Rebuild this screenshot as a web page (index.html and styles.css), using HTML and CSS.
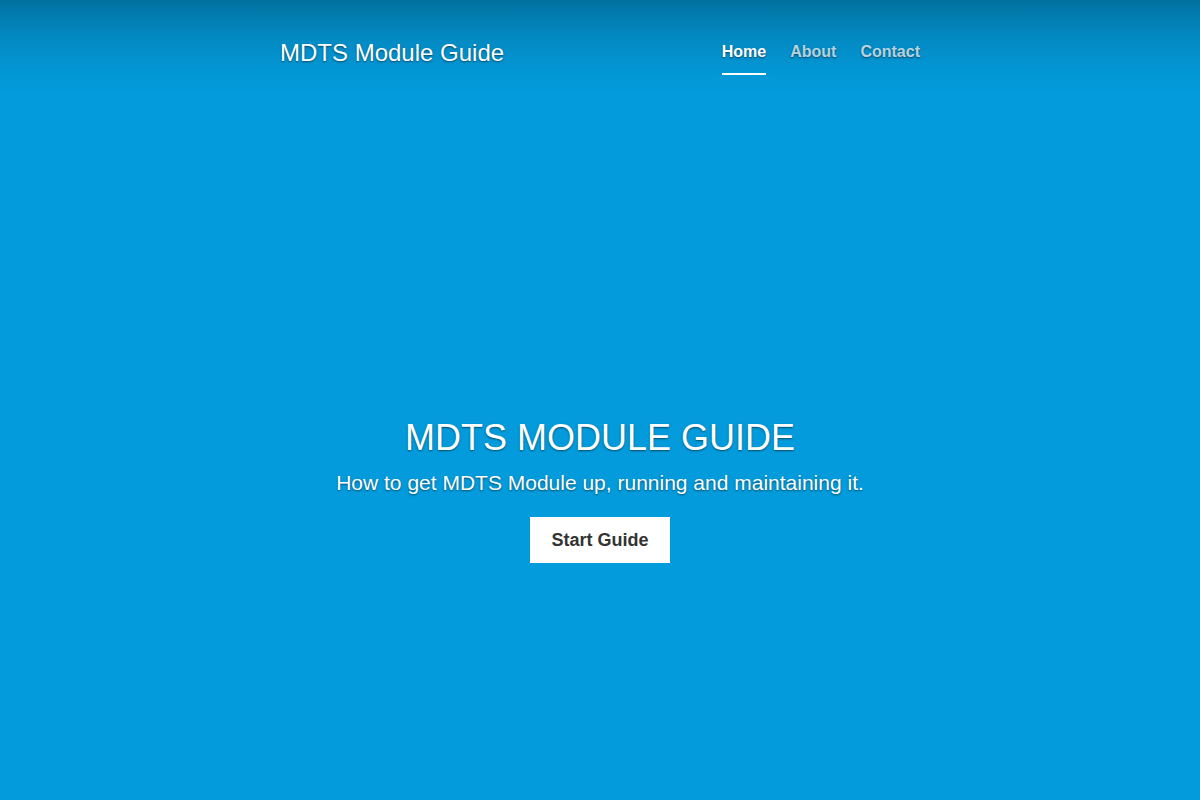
FILE: index.html
```html
<!DOCTYPE html>
<html lang="en">
<head>
<meta charset="utf-8">
<title>MDTS Module Guide</title>
<link rel="stylesheet" href="styles.css">
</head>
<body>
<div class="page">
  <header class="masthead">
    <div class="brand">MDTS Module Guide</div>
    <nav class="nav">
      <a class="nav-link active" href="#">Home</a>
      <a class="nav-link" href="#">About</a>
      <a class="nav-link" href="#">Contact</a>
    </nav>
  </header>
  <main class="hero">
    <h1 class="hero-title">MDTS MODULE GUIDE</h1>
    <p class="lead">How to get MDTS Module up, running and maintaining it.</p>
    <a class="btn" href="#">Start Guide</a>
  </main>
</div>
</body>
</html>
```
FILE: styles.css
```css
html, body {
  margin: 0;
  padding: 0;
  height: 100%;
}
body {
  background: #039bdb;
  font-family: "Liberation Sans", Arial, sans-serif;
  color: #fff;
  text-shadow: 0 1px 2px rgba(0, 0, 0, 0.5);
}
.page {
  min-height: 100%;
  display: flex;
  flex-direction: column;
  background: linear-gradient(to bottom, rgba(0, 0, 0, 0.27) 0, rgba(0, 0, 0, 0.12) 35px, rgba(0, 0, 0, 0.03) 70px, rgba(0, 0, 0, 0) 95px);
}
.masthead {
  width: 640px;
  margin: 0 auto;
  padding-top: 37px;
  display: flex;
  justify-content: space-between;
  align-items: flex-start;
}
.brand {
  font-size: 24px;
  line-height: 32px;
}
.nav {
  display: flex;
  gap: 24px;
  margin-top: 3px;
}
.nav-link {
  font-size: 16px;
  line-height: 24px;
  font-weight: 700;
  color: rgba(255, 255, 255, 0.72);
  text-decoration: none;
  padding-bottom: 9px;
  border-bottom: 2px solid transparent;
}
.nav-link.active {
  color: #fff;
  border-bottom-color: #fff;
}
.hero {
  margin-top: 341px;
  display: flex;
  flex-direction: column;
  align-items: center;
  text-align: center;
}
.hero-title {
  margin: 0 0 9px;
  font-size: 36px;
  line-height: 43px;
  font-weight: 400;
}
.lead {
  margin: 0 0 19px;
  font-size: 21px;
  line-height: 30px;
}
.btn {
  display: inline-block;
  background: #fff;
  color: #333;
  text-shadow: none;
  font-size: 18px;
  line-height: 26px;
  font-weight: 700;
  padding: 10px 21px;
  text-decoration: none;
}
```
